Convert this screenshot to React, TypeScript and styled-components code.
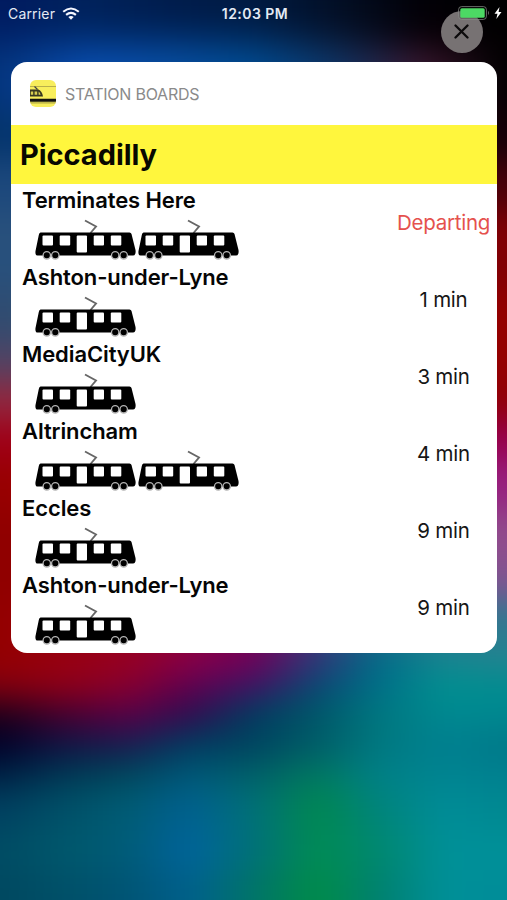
import React from "react";
import styled, { createGlobalStyle } from "styled-components";

const GlobalStyle = createGlobalStyle`
  * { box-sizing: border-box; }
  body { margin: 0; background: #001230; font-family: Inter, "Liberation Sans", sans-serif; }
`;

/* Colour bands of the wallpaper: [top, height, colours from left to right]. */
const bands: [number, number, string[]][] = [
  [-60, 88, ["#001a60", "#00225c", "#001c4c", "#001a42", "#020e24", "#020006", "#000000"]],
  [28, 22, ["#00256c", "#003078", "#003070", "#002c60", "#081a38", "#0c0008", "#000000"]],
  [50, 60, ["#04347c", "#0a4eb0", "#084ea2", "#004c92", "#103464", "#3c1830", "#000000"]],
  [110, 50, ["#04346c", "#0c3c7c", "#204080", "#204080", "#200010", "#200010", "#140006"]],
  [160, 50, ["#1c487c", "#1c487c", "#204080", "#204080", "#400010", "#480010", "#480008"]],
  [210, 80, ["#28507c", "#28507c", "#304080", "#304080", "#800010", "#800008", "#800004"]],
  [290, 50, ["#304c70", "#305078", "#404060", "#600040", "#900000", "#900000", "#940000"]],
  [340, 40, ["#504464", "#504464", "#604060", "#600040", "#900000", "#900000", "#940000"]],
  [380, 40, ["#902840", "#902840", "#802040", "#600040", "#900000", "#900000", "#900008"]],
  [420, 40, ["#a00018", "#a00018", "#9c0010", "#900030", "#900040", "#900040", "#980050"]],
  [460, 50, ["#980000", "#9c0008", "#9c0010", "#900030", "#903080", "#902078", "#982080"]],
  [510, 50, ["#900000", "#900000", "#9c0010", "#900030", "#905090", "#904c90", "#904c8c"]],
  [560, 40, ["#900000", "#900000", "#9c0010", "#900030", "#605090", "#805490", "#805490"]],
  [600, 42, ["#940000", "#980010", "#940028", "#780058", "#305080", "#307890", "#307890"]],
  [642, 30, ["#940000", "#980010", "#980020", "#8c0048", "#740058", "#343478", "#006c88", "#188490", "#248490"]],
  [672, 28, ["#840010", "#900018", "#880030", "#600050", "#3c1464", "#084874", "#007088", "#009090", "#008c90"]],
  [700, 30, ["#1c0018", "#440030", "#580048", "#300c50", "#003c60", "#005868", "#007880", "#008890", "#008890"]],
  [730, 30, ["#000028", "#101444", "#181c50", "#003c60", "#004460", "#005c68", "#007880", "#008090", "#007888"]],
  [760, 30, ["#002044", "#003854", "#00485c", "#005878", "#006068", "#007860", "#008088", "#008490", "#008090"]],
  [790, 40, ["#004060", "#005068", "#005c74", "#006090", "#007078", "#008850", "#00847c", "#008c98", "#008890"]],
  [830, 40, ["#004c64", "#00586c", "#005c78", "#00649c", "#007078", "#008c54", "#008870", "#009098", "#009098"]],
  [870, 90, ["#004860", "#005068", "#005474", "#00608c", "#007468", "#008c48", "#008070", "#009098", "#008c98"]],
];

const Screen = styled.div`
  width: 507px;
  height: 900px;
  display: grid;
  overflow: hidden;
`;

const Wallpaper = styled.div`
  grid-area: 1 / 1;
  width: 627px;
  height: 1020px;
  margin: -60px;
  filter: blur(16px);
  background-color: #001230;
  background-image: ${bands
    .map(
      ([, , c]) =>
        `linear-gradient(to right, ${c.map((v, i) => `${v} ${60 + (i * 507) / (c.length - 1)}px`).join(", ")})`
    )
    .join(", ")};
  background-size: ${bands.map(([, h]) => `100% ${h}px`).join(", ")};
  background-position: ${bands.map(([y]) => `0 ${y + 60}px`).join(", ")};
  background-repeat: no-repeat;
`;

const Content = styled.div`
  grid-area: 1 / 1;
  position: relative;
  width: 507px;
  padding: 0 10px 0 11px;
`;

const StatusBar = styled.header`
  display: grid;
  grid-template-columns: 1fr auto 1fr;
  align-items: center;
  height: 26px;
  margin: 0 -5px 36px -3px;
  color: #e4eaf4;
  position: relative;
  z-index: 2;
`;

const StatusGroup = styled.div<{ $end?: boolean }>`
  display: flex;
  align-items: center;
  justify-content: ${(p) => (p.$end ? "flex-end" : "flex-start")};
  gap: ${(p) => (p.$end ? 4 : 7)}px;
  font-size: 14px;
  letter-spacing: 0.18px;
`;

const Clock = styled.time`
  font-size: 14px;
  font-weight: 600;
  letter-spacing: 0.45px;
`;

const CloseButton = styled.button`
  position: absolute;
  z-index: 1;
  left: 441px;
  top: 11px;
  width: 42px;
  height: 42px;
  padding: 0;
  border: 0;
  border-radius: 50%;
  background: #777273;
  display: grid;
  place-items: center;
`;

const Widget = styled.main`
  height: 591px;
  border-radius: 16px;
  overflow: hidden;
  background: #fff;
`;

const WidgetHeader = styled.div`
  display: flex;
  align-items: center;
  gap: 9px;
  height: 63px;
  padding-left: 19px;
  color: #8a8a8a;
  font-size: 16px;
`;

const WidgetTitle = styled.span`
  letter-spacing: -0.24px;
`;

const StationName = styled.h1`
  margin: 0;
  height: 59px;
  padding-left: 9px;
  background: #fff63d;
  color: #080800;
  font-size: 29px;
  line-height: 60px;
  font-weight: 700;
  letter-spacing: -0.05px;
`;

const Row = styled.section`
  display: grid;
  grid-template-columns: 1fr 107px;
  height: 77px;
  padding-left: 11px;
`;

const Destination = styled.h2`
  margin: 0;
  height: 33px;
  font-size: 22px;
  line-height: 33px;
  font-weight: 600;
  letter-spacing: -0.1px;
  color: #050505;
  white-space: nowrap;
`;

const Trams = styled.div`
  display: flex;
  gap: 1px;
  padding-left: 12px;
`;

const Due = styled.div<{ $now?: boolean }>`
  height: 77px;
  line-height: 78px;
  text-align: center;
  font-size: 20.5px;
  letter-spacing: -0.25px;
  color: ${(p) => (p.$now ? "#e5514d" : "#161616")};
`;

const Tram = () => (
  <svg width="102" height="43" viewBox="0 0 102 43" aria-label="Tram">
    <path d="M51 3.5 62 9.5l-5.500 6.500" fill="none" stroke="#666" strokeWidth="1.9" />
    <path
      d="M6.500 15.500h89q1.500 0 2 1.500l4 16q.7 5.500-2.500 5.500H3.500q-2.500 0-2-4.500l3.300-16q.4-2.500 1.700-2.500z"
      fill="#000"
    />
    <g fill="#fff">
      <rect x="8.500" y="18.500" width="10.500" height="10" rx="1" />
      <rect x="25.700" y="18.500" width="10.500" height="10" rx="1" />
      <rect x="42.700" y="18.500" width="10.300" height="17" rx="1" />
      <rect x="59.700" y="18.500" width="10.300" height="10" rx="1" />
      <rect x="76.800" y="18.500" width="10.500" height="10" rx="1" />
    </g>
    <g fill="#000" stroke="#b4b4b4" strokeWidth="1.300">
      <circle cx="12.800" cy="38.300" r="3.700" />
      <circle cx="21.300" cy="38.300" r="3.700" />
      <circle cx="81.200" cy="38.300" r="3.700" />
      <circle cx="89.700" cy="38.300" r="3.700" />
    </g>
  </svg>
);

const AppIcon = () => (
  <svg width="26" height="27" viewBox="0 0 26 27">
    <defs>
      <clipPath id="icon-shape">
        <rect width="26" height="27" rx="6" />
      </clipPath>
    </defs>
    <g clipPath="url(#icon-shape)">
      <rect width="26" height="27" fill="#f8ee5c" />
      <path d="M0 6.500h26" stroke="#a8a047" strokeWidth=".8" />
      <path d="M4.500 6.500 7.500 9.500" stroke="#444" strokeWidth="1.200" />
      <path d="M0 9.500h8.500q3.500 1.500 4.500 7H0z" fill="#373721" />
      <path d="M.8 11.500h2.400v3.300H.8zM4.600 11.500h2.600v3.300H4.600zM8.600 11.500q1.500.8 2 3.300h-2z" fill="#d8ce50" />
      <path d="M0 20.300h26" stroke="#111" strokeWidth="3" />
      <path d="M0 22.800h26" stroke="#b0a846" strokeWidth="1.200" />
    </g>
  </svg>
);

const Wifi = () => (
  <svg width="18" height="13" viewBox="0 0 18 13">
    <g fill="none" stroke="#f4f7ff" strokeWidth="2.100">
      <path d="M1.200 4.800q7.800-6.600 15.600 0" />
      <path d="M4.100 7.900q4.900-4 9.800 0" />
    </g>
    <path d="M6.300 10q2.700-2.200 5.400 0L9 12.700z" fill="#f4f7ff" />
  </svg>
);

const Battery = () => (
  <svg width="32" height="14" viewBox="0 0 32 14">
    <rect
      x=".6"
      y=".6"
      width="27.800"
      height="12.800"
      rx="3"
      fill="#000"
      fillOpacity=".15"
      stroke="#8b8f8b"
      strokeOpacity=".75"
      strokeWidth="1"
    />
    <rect x="2.300" y="2.300" width="24.400" height="9.400" rx="1.500" fill="#4cd964" />
    <path d="M30 4.800q2 2.200 0 4.400z" fill="#666" />
  </svg>
);

const Bolt = () => (
  <svg width="8" height="12" viewBox="0 0 8 12">
    <path d="M5.500 0 .5 6.800h3L2.300 12l5.200-7H4.600z" fill="#fff" />
  </svg>
);

const departures = [
  { to: "Terminates Here", trams: 2, due: "Departing" },
  { to: "Ashton-under-Lyne", trams: 1, due: "1 min" },
  { to: "MediaCityUK", trams: 1, due: "3 min" },
  { to: "Altrincham", trams: 2, due: "4 min" },
  { to: "Eccles", trams: 1, due: "9 min" },
  { to: "Ashton-under-Lyne", trams: 1, due: "9 min" },
];

export default function App() {
  return (
    <Screen>
      <GlobalStyle />
      <Wallpaper />
      <Content>
        <StatusBar>
          <StatusGroup>
            Carrier
            <Wifi />
          </StatusGroup>
          <Clock>12:03 PM</Clock>
          <StatusGroup $end>
            <Battery />
            <Bolt />
          </StatusGroup>
        </StatusBar>
        <CloseButton aria-label="Close">
          <svg width="16" height="16" viewBox="0 0 16 16">
            <path d="M1.500 1.500l12 12M13.500 1.500l-12 12" stroke="#0c0a0b" strokeWidth="2.300" strokeLinecap="round" />
          </svg>
        </CloseButton>
        <Widget>
          <WidgetHeader>
            <AppIcon />
            <WidgetTitle>STATION BOARDS</WidgetTitle>
          </WidgetHeader>
          <StationName>Piccadilly</StationName>
          {departures.map((d, i) => (
            <Row key={i}>
              <div>
                <Destination>{d.to}</Destination>
                <Trams>
                  {Array.from({ length: d.trams }, (_, n) => (
                    <Tram key={n} />
                  ))}
                </Trams>
              </div>
              <Due $now={d.due === "Departing"}>{d.due}</Due>
            </Row>
          ))}
        </Widget>
      </Content>
    </Screen>
  );
}
